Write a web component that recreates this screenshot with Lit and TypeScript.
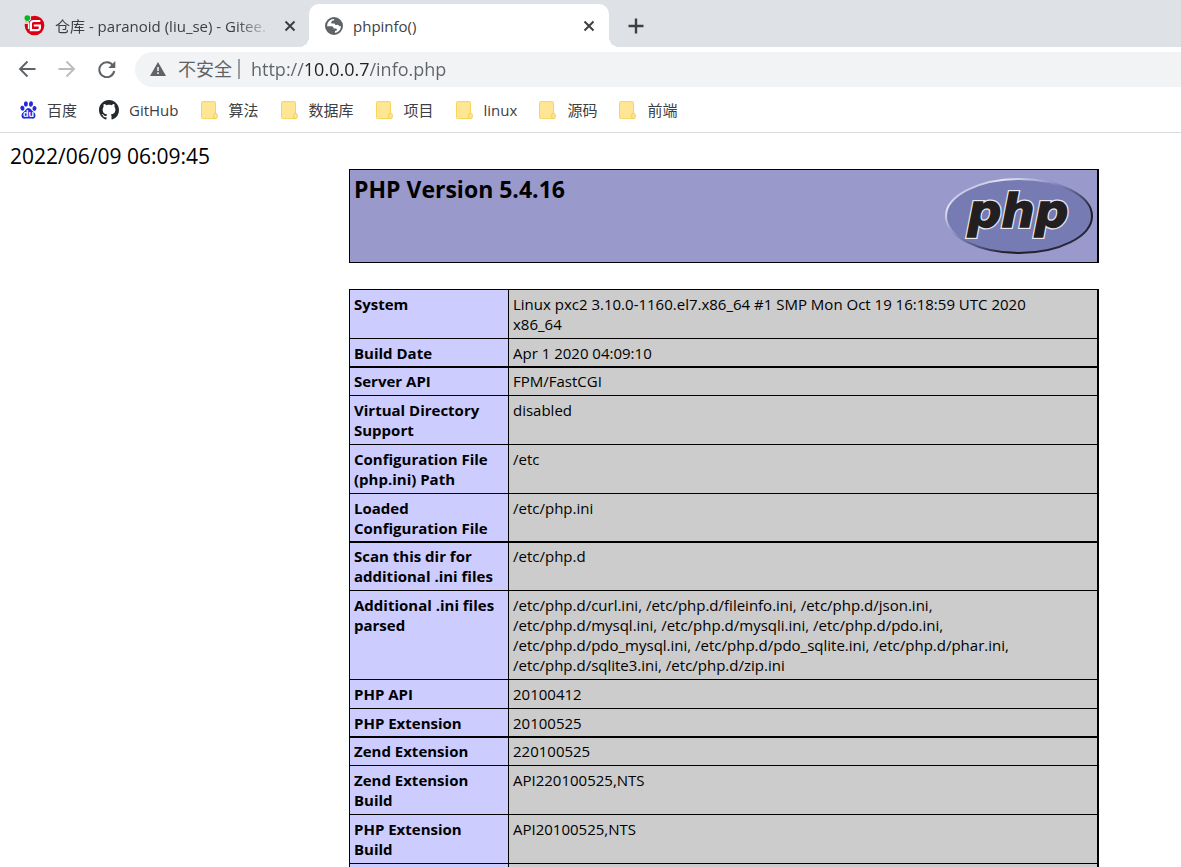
import { LitElement, html, svg, css } from "lit";
import { customElement } from "lit/decorators.js";

const ROWS: [string, string][] = [
  ["System", "Linux pxc2 3.10.0-1160.el7.x86_64 #1 SMP Mon Oct 19 16:18:59 UTC 2020 x86_64"],
  ["Build Date", "Apr 1 2020 04:09:10"],
  ["Server API", "FPM/FastCGI"],
  ["Virtual Directory Support", "disabled"],
  ["Configuration File (php.ini) Path", "/etc"],
  ["Loaded Configuration File", "/etc/php.ini"],
  ["Scan this dir for additional .ini files", "/etc/php.d"],
  [
    "Additional .ini files parsed",
    "/etc/php.d/curl.ini, /etc/php.d/fileinfo.ini, /etc/php.d/json.ini, /etc/php.d/mysql.ini, /etc/php.d/mysqli.ini, /etc/php.d/pdo.ini, /etc/php.d/pdo_mysql.ini, /etc/php.d/pdo_sqlite.ini, /etc/php.d/phar.ini, /etc/php.d/sqlite3.ini, /etc/php.d/zip.ini",
  ],
  ["PHP API", "20100412"],
  ["PHP Extension", "20100525"],
  ["Zend Extension", "220100525"],
  ["Zend Extension Build", "API220100525,NTS"],
  ["PHP Extension Build", "API20100525,NTS"],
  ["", ""],
];

const FOLDERS = ["算法", "数据库", "项目", "linux", "源码", "前端"];

const closeIcon = html`<svg width="12" height="12" viewBox="0 0 12 12" aria-hidden="true">
  <path d="M1.5 1.5 10.5 10.5M10.5 1.5 1.5 10.5" stroke="#3c4043" stroke-width="2" fill="none" />
</svg>`;

const giteeIcon = html`<svg width="21" height="21" viewBox="0 0 21 21" aria-hidden="true">
  <circle cx="10.5" cy="10.5" r="9.8" fill="#d90013" />
  <path d="M16.300 6H9.500a2.600 2.600 0 0 0-2.600 2.600v6.600h6.600a2.400 2.400 0 0 0 2.400-2.400v-2.300H9.800" stroke="#fff" stroke-width="2.2" fill="none" />
  <circle cx="3.300" cy="3.100" r="3.800" fill="#dee1e6" />
  <circle cx="3.300" cy="3.100" r="2.800" fill="#0cb51c" />
  <path d="M1 8h3.600v6" stroke="#fff" stroke-width="1.4" fill="none" />
</svg>`;

const globeIcon = html`<svg width="18" height="18" viewBox="0 0 18 18" aria-hidden="true">
  <circle cx="9" cy="9" r="8" fill="#fff" stroke="#5f6368" stroke-width="2" />
  <path d="M9 1a8 8 0 0 1 7.9 7.2c-.8.9-1.6 1.2-2.5.7l-1.5-1.2-2.4.2-1-1.4H6.600L6 5.200l1.300-1.500 1.900-.4z" fill="#5f6368" />
  <path d="M1.200 9.300h5.100c1.500 0 2.300.8 2.300 2.100h2.200c1.100 0 1.300.9 1.100 1.900l-1.800.6-.3 2.700A8 8 0 0 1 1.200 9.300z" fill="#5f6368" />
</svg>`;

const plusIcon = html`<svg width="16" height="16" viewBox="0 0 16 16" aria-hidden="true">
  <path d="M8 .5v15M.5 8h15" stroke="#3c4043" stroke-width="2.4" fill="none" />
</svg>`;

const arrow = (color: string, d: string) => html`<svg width="18" height="18" viewBox="0 0 18 18" aria-hidden="true">
  <path d=${d} stroke=${color} stroke-width="1.9" fill="none" />
</svg>`;

const reloadIcon = html`<svg width="18" height="18" viewBox="0 0 18 18" aria-hidden="true">
  <path d="M15 5.400A7.500 7.500 0 1 0 16.200 11" stroke="#5f6368" stroke-width="2" fill="none" />
  <path d="M17.300 1v7h-7z" fill="#5f6368" />
</svg>`;

const warningIcon = html`<svg width="16" height="14" viewBox="0 0 16 14" aria-hidden="true">
  <path d="M8 0 16 14H0z" fill="#5f6368" />
  <path d="M8 5v4M8 10.300v1.700" stroke="#f1f3f4" stroke-width="1.6" />
</svg>`;

const baiduIcon = html`<svg width="17" height="18" viewBox="0 0 17 18" aria-hidden="true">
  <g fill="#2529d8">
    <ellipse cx="2.400" cy="7.200" rx="2" ry="2.500" transform="rotate(-12 2.400 7.200)" />
    <ellipse cx="5.900" cy="3" rx="2" ry="2.700" />
    <ellipse cx="11" cy="3" rx="2" ry="2.700" transform="rotate(8 11 3)" />
    <ellipse cx="14.500" cy="7.400" rx="2" ry="2.500" transform="rotate(10 14.500 7.400)" />
    <path d="M8.500 7c2.300 0 2.900 2.300 4.500 3.600 1.700 1.400 2.800 2.600 2.400 4.600-.4 2.100-2 2.700-3.800 2.400-2-.3-4.200-.3-6.200 0-1.900.3-3.400-.3-3.800-2.400-.4-2 .8-3.200 2.500-4.600C5.700 9.300 6.200 7 8.500 7z" />
  </g>
  <text x="8.500" y="16" font-family="Liberation Sans, sans-serif" font-size="9" font-weight="700" fill="#fff" text-anchor="middle">du</text>
</svg>`;

const githubIcon = html`<svg width="20" height="20" viewBox="0 0 16 16" aria-hidden="true">
  <path
    fill="#24292e"
    d="M8 0C3.580 0 0 3.580 0 8c0 3.540 2.290 6.530 5.470 7.590.4.070.55-.17.55-.38 0-.19-.01-.82-.01-1.490-2.010.37-2.530-.49-2.690-.94-.09-.23-.48-.94-.82-1.130-.28-.15-.68-.52-.01-.53.63-.01 1.080.58 1.230.82.72 1.210 1.870.87 2.330.66.07-.52.28-.87.51-1.070-1.780-.2-3.640-.89-3.640-3.950 0-.87.31-1.590.82-2.150-.08-.2-.36-1.020.08-2.120 0 0 .67-.21 2.200.82.64-.18 1.320-.27 2-.27s1.360.09 2 .27c1.530-1.040 2.200-.82 2.200-.82.44 1.100.16 1.920.08 2.120.51.56.82 1.270.82 2.150 0 3.070-1.870 3.750-3.650 3.950.29.25.54.73.54 1.480 0 1.070-.01 1.930-.01 2.200 0 .21.15.46.55.38A8.010 8.010 0 0 0 16 8c0-4.420-3.580-8-8-8z"
  />
</svg>`;

const folderIcon = html`<svg width="17" height="18" viewBox="0 0 17 18" aria-hidden="true">
  <path d="M1.500.6h12a1 1 0 0 1 1 1v15a1 1 0 0 1-1 1h-12a1 1 0 0 1-1-1v-15a1 1 0 0 1 1-1z" fill="#ffe694" stroke="#f8d45c" />
  <path d="M12.800 17.400v-3.600c0-2.200 3.400-2.200 3.400 0v2.600a1 1 0 0 1-1 1z" fill="#ffe694" stroke="#f3cd52" />
</svg>`;

const phpMark = (stroke: string, width: number) => svg`<text x="74" y="53" text-anchor="middle"
  font-family="DejaVu Sans, sans-serif" font-size="47" font-weight="700" font-style="italic"
  fill="#231f20" stroke=${stroke} stroke-width=${width}>php</text>`;

const phpLogo = html`<svg class="logo" width="150" height="84" viewBox="0 0 150 84" role="img" aria-label="PHP logo">
  <defs>
    <linearGradient id="rim" x1="0" y1="0" x2="1" y2="1">
      <stop offset="0" stop-color="#7a7eb5" />
      <stop offset=".2" stop-color="#e4e5f2" />
      <stop offset=".42" stop-color="#8184b8" />
      <stop offset=".58" stop-color="#4b4d73" />
      <stop offset=".72" stop-color="#1d1a20" />
      <stop offset="1" stop-color="#35365a" />
    </linearGradient>
  </defs>
  <ellipse cx="75" cy="42" rx="73" ry="37" fill="#777bb3" stroke="url(#rim)" stroke-width="2" />
  ${phpMark("#e8e8ef", 4)} ${phpMark("#231f20", 1.5)}
</svg>`;

@customElement("app-root")
export class AppRoot extends LitElement {
  static styles = css`
    :host {
      display: block;
      height: 100vh;
      overflow: hidden;
      background: #fff;
      color: #000;
      font-family: "Open Sans", "Noto Sans CJK SC", sans-serif;
      font-size: 15px;
      line-height: 20px;
    }
    * {
      box-sizing: border-box;
    }
    button {
      border: 0;
      padding: 0;
      background: none;
      font: inherit;
      color: inherit;
      text-align: left;
      display: flex;
      align-items: center;
    }
    svg {
      display: block;
      flex: none;
    }
    .tabs {
      display: flex;
      align-items: flex-end;
      height: 47px;
      background: #dee1e6;
      color: #3c4043;
    }
    .tab {
      display: flex;
      align-items: center;
      height: 43px;
      width: 300px;
      padding: 0 14px 0 16px;
    }
    .tab.first {
      width: 309px;
      padding: 0 13px 0 24px;
    }
    .tab.active {
      position: relative;
      background: #fff;
      border-radius: 10px 10px 0 0;
    }
    .tab.active::before,
    .tab.active::after {
      content: "";
      position: absolute;
      bottom: 0;
      width: 10px;
      height: 10px;
    }
    .tab.active::before {
      left: -10px;
      background: radial-gradient(circle at 0 0, transparent 10px, #fff 10px);
    }
    .tab.active::after {
      right: -10px;
      background: radial-gradient(circle at 100% 0, transparent 10px, #fff 10px);
    }
    .pick {
      flex: 1;
      min-width: 0;
      gap: 10px;
    }
    .title {
      flex: 1;
      min-width: 0;
      overflow: hidden;
      white-space: nowrap;
    }
    .fade {
      mask-image: linear-gradient(to right, #000 calc(100% - 36px), transparent);
    }
    .close {
      margin-left: 12px;
    }
    .add {
      height: 43px;
      margin-left: 19px;
    }
    .toolbar {
      display: flex;
      align-items: center;
      height: 45px;
      padding-left: 18px;
      gap: 22px;
    }
    .toolbar > button {
      height: 20px;
      align-items: flex-start;
    }
    .omnibox {
      flex: 1;
      display: flex;
      align-items: center;
      height: 35px;
      margin-left: -3px;
      padding: 0 0 2px 15px;
      border-radius: 18px 0 0 18px;
      background: #f1f3f4;
      color: #5f6368;
      font-size: 18px;
    }
    .notice {
      gap: 12px;
    }
    .divider {
      width: 2px;
      height: 20px;
      margin: 0 11px 0 6px;
      background: #9a9da1;
    }
    .url {
      flex: 1;
      min-width: 0;
      height: 30px;
      border: 0;
      padding: 0;
      outline: 0;
      font: inherit;
      color: transparent;
      background: linear-gradient(to right, #5f6368 54px, #202124 54px, #202124 118px, #5f6368 118px);
      -webkit-background-clip: text;
      background-clip: text;
    }
    .bookmarks {
      display: flex;
      align-items: center;
      height: 41px;
      padding: 0 20px 4px;
      gap: 22px;
      border-bottom: 1px solid #dadce0;
      color: #3c4043;
    }
    .bookmark {
      display: flex;
      align-items: center;
      gap: 11px;
      color: inherit;
      text-decoration: none;
      white-space: nowrap;
    }
    .bookmark.site {
      gap: 10px;
    }
    .stamp {
      padding: 11px 10px 0;
      font-size: 21px;
      line-height: 25px;
    }
    .info {
      padding: 0 82px 0 349px;
    }
    .banner {
      display: flex;
      justify-content: space-between;
      align-items: flex-start;
      height: 94px;
      margin-bottom: 26px;
      padding: 4px 3px 4px 4px;
      border: 1px solid #000;
      border-right-width: 2px;
      background: #9999cc;
    }
    h1 {
      margin: 0;
      font-size: 23px;
      line-height: 30px;
    }
    table {
      width: 100%;
      table-layout: fixed;
      border-collapse: separate;
      border-spacing: 0;
      border: solid #000;
      border-width: 1px 1px 0 1px;
    }
    th,
    td {
      padding: 4px;
      border: solid #000;
      border-width: 0 1px 1px 0;
      vertical-align: top;
      text-align: left;
    }
    th {
      width: 159px;
      background: #ccccff;
    }
    td {
      padding-right: 24px;
      background: #cccccc;
    }
    tr:nth-child(4n + 2) > * {
      padding-bottom: 3px;
      border-bottom-width: 2px;
    }
    tr:nth-child(4n + 3) > * {
      padding-top: 3px;
    }
  `;

  render() {
    return html`
      <header>
        <div class="tabs">
          <div class="tab first">
            <button class="pick">${giteeIcon}<span class="title fade">仓库 - paranoid (liu_se) - Gitee.</span></button>
            <button class="close" aria-label="Close tab">${closeIcon}</button>
          </div>
          <div class="tab active">
            <button class="pick">${globeIcon}<span class="title">phpinfo()</span></button>
            <button class="close" aria-label="Close tab">${closeIcon}</button>
          </div>
          <button class="add" aria-label="New tab">${plusIcon}</button>
        </div>
        <div class="toolbar">
          <button aria-label="Back">${arrow("#5f6368", "M17.500 9H2.500M9.500 1.500 2 9l7.500 7.500")}</button>
          <button aria-label="Forward">${arrow("#babcbe", "M.5 9h15M8.500 1.500 16 9l-7.500 7.500")}</button>
          <button aria-label="Reload">${reloadIcon}</button>
          <div class="omnibox">
            <button class="notice">${warningIcon}<span>不安全</span></button>
            <span class="divider"></span>
            <input class="url" type="text" aria-label="Address" value="http://10.0.0.7/info.php" />
          </div>
        </div>
        <nav class="bookmarks">
          <a class="bookmark site" href="#">${baiduIcon}百度</a>
          <a class="bookmark site" href="#">${githubIcon}GitHub</a>
          ${FOLDERS.map((name) => html`<a class="bookmark" href="#">${folderIcon}${name}</a>`)}
        </nav>
      </header>
      <main>
        <div class="stamp">2022/06/09 06:09:45</div>
        <div class="info">
          <div class="banner">
            <h1>PHP Version 5.4.16</h1>
            ${phpLogo}
          </div>
          <table>
            <tbody>
              ${ROWS.map(([name, value]) => html`<tr><th scope="row">${name}</th><td>${value}</td></tr>`)}
            </tbody>
          </table>
        </div>
      </main>
    `;
  }
}
